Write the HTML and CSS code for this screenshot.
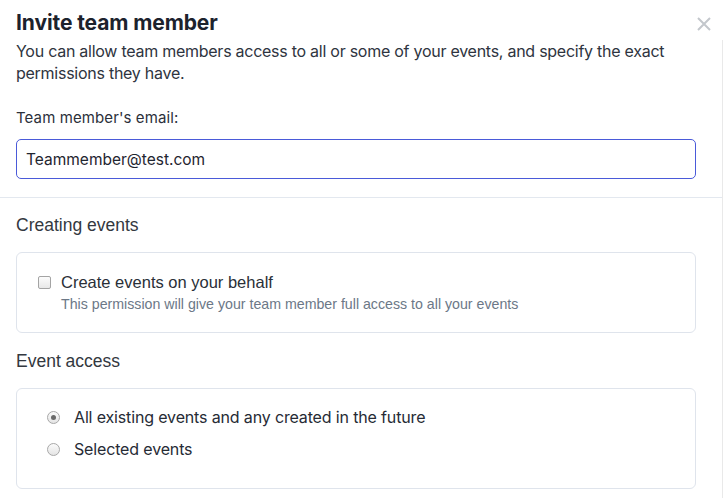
FILE: index.html
```html
<!DOCTYPE html>
<html>
<head>
<meta charset="utf-8">
<link rel="stylesheet" href="styles.css">
</head>
<body>
<div class="modal">
  <div class="header">
    <h1 class="title">Invite team member</h1>
    <button class="close" aria-label="Close">
      <svg width="14" height="14" viewBox="0 0 14 14"><path d="M1 1L13 13M13 1L1 13" stroke="#c3c7cc" stroke-width="2" fill="none"/></svg>
    </button>
  </div>
  <div class="body">
    <div class="intro">
      <p class="subtitle">You can allow team members access to all or some of your events, and specify the exact permissions they have.</p>
      <label class="field-label">Team member's email:</label>
      <div class="input">Teammember@test.com</div>
    </div>
    <div class="section">
      <h2 class="section-title">Creating events</h2>
      <div class="box box-check">
        <div class="check-row">
          <span class="checkbox"></span>
          <div class="check-text">
            <div class="check-label">Create events on your behalf</div>
            <div class="check-help">This permission will give your team member full access to all your events</div>
          </div>
        </div>
      </div>
      <h2 class="section-title">Event access</h2>
      <div class="box box-radio">
        <div class="radio-row"><span class="radio checked"></span><span class="radio-label">All existing events and any created in the future</span></div>
        <div class="radio-row"><span class="radio"></span><span class="radio-label">Selected events</span></div>
      </div>
    </div>
  </div>
</div>
</body>
</html>
```
FILE: styles.css
```css
html, body {
  margin: 0;
  padding: 0;
  background: #ffffff;
}
.modal {
  width: 725px;
  height: 498px;
  overflow: hidden;
  font-family: Inter, "Noto Sans", sans-serif;
  color: #1f2530;
}
.header {
  display: flex;
  justify-content: space-between;
  align-items: flex-start;
  padding: 10px 14px 0 16px;
  height: 30px;
}
.title {
  margin: 0;
  font-size: 21px;
  line-height: 26px;
  font-weight: 700;
  letter-spacing: -0.1px;
  color: #1c222d;
}
.close {
  border: 0;
  background: none;
  padding: 0;
  margin-top: 7px;
  width: 14px;
  height: 14px;
  display: flex;
}
.body {
  width: 722px;
  border-right: 1px solid #e9e9e9;
  height: 458px;
}
.intro {
  padding: 0 26px 0 16px;
  border-bottom: 1px solid #e3e8ef;
}
.subtitle {
  margin: 0;
  font-size: 16px;
  line-height: 22px;
  letter-spacing: -0.26px;
  color: #2e3440;
}
.field-label {
  display: block;
  margin-top: 24px;
  font-size: 15px;
  line-height: 20px;
  letter-spacing: 0.1px;
  color: #2b303a;
}
.input {
  margin-top: 11px;
  height: 38px;
  border: 1px solid #4a5ad9;
  border-radius: 5px;
  padding: 0 9px;
  display: flex;
  align-items: center;
  font-size: 15.5px;
  color: #1f2530;
  margin-bottom: 18px;
}
.section {
  padding: 0 26px 0 16px;
}
.section-title {
  margin: 0;
  font-family: "Liberation Sans", Arial, sans-serif;
  font-weight: 400;
  font-size: 17.5px;
  line-height: 22px;
  color: #333840;
}
.section-title:first-child {
  margin-top: 16px;
}
.box {
  border: 1px solid #dfe4ec;
  border-radius: 6px;
  margin-top: 16px;
  margin-bottom: 17px;
}
.box-check {
  height: 81px;
  box-sizing: border-box;
  padding: 20px 22px 0 21px;
}
.check-row {
  display: flex;
  align-items: flex-start;
}
.checkbox {
  width: 11px;
  height: 11px;
  border: 1px solid #a4a4a4;
  border-radius: 2px;
  background: linear-gradient(#fcfcfc, #e8e8e8);
  margin-top: 3px;
  margin-right: 10px;
  flex: none;
}
.check-label {
  font-family: "Liberation Sans", Arial, sans-serif;
  font-size: 16.5px;
  line-height: 19px;
  color: #2a2f38;
}
.check-help {
  margin-top: 4px;
  font-family: "Liberation Sans", Arial, sans-serif;
  font-size: 14.2px;
  line-height: 17px;
  color: #6c7887;
}
.box-radio {
  height: 101px;
  box-sizing: border-box;
  padding: 18px 22px 0 30px;
  display: flex;
  flex-direction: column;
  gap: 12px;
}
.radio-row {
  display: flex;
  align-items: center;
  height: 20px;
}
.radio {
  width: 11px;
  height: 11px;
  border: 1px solid #a8a8a8;
  border-radius: 50%;
  background: linear-gradient(#fbfbfb, #e4e4e4);
  margin-right: 14px;
  flex: none;
  display: flex;
  align-items: center;
  justify-content: center;
}
.radio.checked::after {
  content: "";
  width: 5px;
  height: 5px;
  border-radius: 50%;
  background: #6a6a6a;
}
.radio-label {
  font-size: 16px;
  letter-spacing: -0.15px;
  color: #262b35;
}
```
